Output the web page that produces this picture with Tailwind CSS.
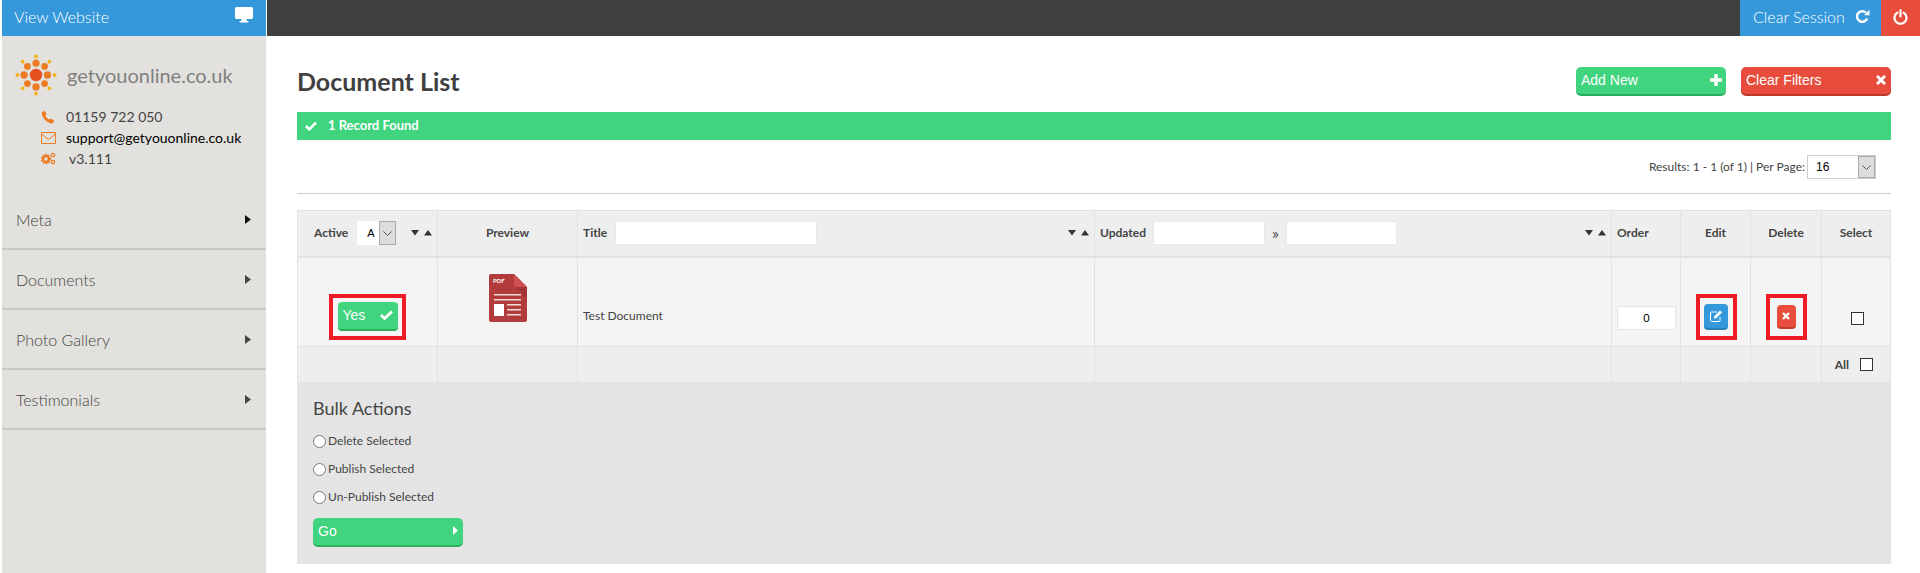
<!DOCTYPE html>
<html><head><meta charset="utf-8"><title>Document List</title>
<script src="https://cdn.jsdelivr.net/npm/@tailwindcss/browser@4"></script></head>
<body class="bg-white font-['Lato','Liberation_Sans',sans-serif] text-[#444] h-[573px] overflow-hidden">
<div class="flex h-[573px]">
  <aside class="w-[264px] ml-[2px] shrink-0 bg-[#e2e1dd] flex flex-col">
    <div class="h-[36px] bg-[#3498db] text-white flex items-center justify-between pl-[12px] pr-[13px] font-light text-[16px]">
      <span class="-mt-[3px]">View Website</span>
      <svg width="18" height="16" viewBox="0 0 18 16" class="-mt-[6px]"><path fill="#fff" fill-rule="evenodd" d="M1.500 0h15A1.500 1.500 0 0 1 18 1.500v9a1.500 1.500 0 0 1-1.500 1.500h-5l.4 2h1.600v1.500h-9V14h1.600l.4-2h-5A1.500 1.500 0 0 1 0 10.500v-9A1.500 1.500 0 0 1 1.500 0z"/></svg>
    </div>
    <div class="flex items-center mt-[16px] pl-[13px] h-[46px]">
      <svg width="42" height="42" viewBox="0 0 44 44" class="shrink-0">
        <g fill="#f5b21b"><circle cx="22" cy="2.500" r="2"/><circle cx="22" cy="41.500" r="2"/><circle cx="2.500" cy="22" r="2"/><circle cx="41.500" cy="22" r="2"/><circle cx="8" cy="8" r="2"/><circle cx="36" cy="8" r="2"/><circle cx="8" cy="36" r="2"/><circle cx="36" cy="36" r="2"/></g>
        <g fill="#ee7b22"><circle cx="22" cy="9.500" r="3.800"/><circle cx="22" cy="34.500" r="3.800"/><circle cx="9.500" cy="22" r="3.800"/><circle cx="34" cy="22" r="3.800"/><circle cx="13" cy="13" r="3.500"/><circle cx="31" cy="13" r="3.500"/><circle cx="13" cy="31" r="3.500"/><circle cx="31" cy="31" r="3.500"/></g>
        <circle cx="22" cy="22" r="6.500" fill="#e4511f"/>
      </svg>
      <span class="ml-[10px] text-[20px] text-[#808080] leading-none">getyouonline.co.uk</span>
    </div>
    <div class="mt-[8px] pl-[39px] text-[14px] leading-[21px]">
      <div class="flex items-center h-[21px]"><svg class="w-[14px] h-[14px] mr-[11px] shrink-0" viewBox="0 0 14 14"><path fill="#ee7b22" d="M3.500 1 5.500 4 4.300 5.600c.7 1.700 2.100 3.100 4 4L10 8.400l3 2-.8 2.400c-.3.500-1 .8-1.700.7C5.800 12.800 1.400 8.500.8 3.600.7 2.800 1 2.200 1.500 1.800z"/></svg><span class="text-[#444]">01159 722 050</span></div>
      <div class="flex items-center h-[21px]"><svg class="w-[15px] h-[12px] mr-[10px] shrink-0" viewBox="0 0 15 12"><path fill="none" stroke="#ee7b22" d="M.5.500h14v11H.5zM.5 2l7 5.500 7-5.500"/></svg><span class="text-black">support@getyouonline.co.uk</span></div>
      <div class="flex items-center h-[21px]"><svg class="w-[15px] h-[13px] mr-[13px] shrink-0" viewBox="0 0 15 13"><circle cx="5" cy="7" r="3" fill="none" stroke="#ee7b22" stroke-width="2.400"/><circle cx="5" cy="7" r="4.700" fill="none" stroke="#ee7b22" stroke-width="1.200" stroke-dasharray="1.500 1.500"/><circle cx="12" cy="3" r="1.700" fill="none" stroke="#ee7b22" stroke-width="1.200"/><circle cx="12" cy="10" r="1.700" fill="none" stroke="#ee7b22" stroke-width="1.200"/></svg><span>v3.111</span></div>
    </div>
    <nav class="mt-[21px] text-[16px] font-light text-[#444]">
      <a class="flex items-center justify-between h-[60px] pl-[14px] pr-[15px] border-b-[2px] border-[#c8c8c6] pt-[2px]"><span>Meta</span><svg width="6" height="9" viewBox="0 0 6 9" class="-mt-[2px]"><path fill="#111" d="M0 0l6 4.500-6 4.500z"/></svg></a>
      <a class="flex items-center justify-between h-[60px] pl-[14px] pr-[15px] border-b-[2px] border-[#c8c8c6] pt-[2px]"><span>Documents</span><svg width="6" height="9" viewBox="0 0 6 9" class="-mt-[2px]"><path fill="#444" d="M0 0l6 4.500-6 4.500z"/></svg></a>
      <a class="flex items-center justify-between h-[60px] pl-[14px] pr-[15px] border-b-[2px] border-[#c8c8c6] pt-[2px]"><span>Photo Gallery</span><svg width="6" height="9" viewBox="0 0 6 9" class="-mt-[2px]"><path fill="#444" d="M0 0l6 4.500-6 4.500z"/></svg></a>
      <a class="flex items-center justify-between h-[60px] pl-[14px] pr-[15px] border-b-[2px] border-[#c8c8c6] pt-[2px]"><span>Testimonials</span><svg width="6" height="9" viewBox="0 0 6 9" class="-mt-[2px]"><path fill="#444" d="M0 0l6 4.500-6 4.500z"/></svg></a>
    </nav>
  </aside>
  <div class="flex-1 min-w-0 ml-[1px]">
    <header class="h-[36px] bg-[#3f3f3f] flex justify-end">
      <a class="w-[141px] bg-[#3498db] text-white flex items-center pl-[13px] text-[16px] font-light"><span class="-mt-[3px]">Clear Session</span>
        <svg class="w-[15px] h-[15px] ml-[10px] -mt-[3px]" viewBox="0 0 15 15"><path fill="none" stroke="#fff" stroke-width="2.400" d="M12.200 9.500A5.300 5.300 0 1 1 11 3.700"/><path fill="#fff" d="M14.500 .8v5.500H9z"/></svg></a>
      <a class="w-[39px] bg-[#e74c3c] flex items-center justify-center"><svg class="w-[15px] h-[16px] -mt-[2px]" viewBox="0 0 15 16"><path fill="none" stroke="#fff" stroke-width="2.200" stroke-linecap="round" d="M4.300 3.700a6 6 0 1 0 6.400 0M7.500 1.200v6.300"/></svg></a>
    </header>
    <main class="pl-[30px] pr-[29px]">
      <div class="flex items-center justify-between h-[76px] pt-[15px]">
        <h1 class="text-[25px] font-bold text-[#3f3f3f] leading-none">Document List</h1>
        <div class="flex gap-[15px] -mt-[1px]">
          <button class="relative w-[150px] h-[29px] rounded-[5px] bg-[#40d47e] border-b-[2px] border-[#27ae60] text-white text-[14px] text-left pl-[5px] font-['Liberation_Sans',sans-serif]">Add New<svg class="absolute right-[4px] top-[7px] w-[12px] h-[12px]" viewBox="0 0 12 12"><path fill="#fff" d="M4.300 0h3.400v4.300H12v3.400H7.700V12H4.300V7.700H0V4.300h4.300z"/></svg></button>
          <button class="relative w-[150px] h-[29px] rounded-[5px] bg-[#e74c3c] border-b-[2px] border-[#c0392b] text-white text-[14px] text-left pl-[5px] font-['Liberation_Sans',sans-serif]">Clear Filters<svg class="absolute right-[5px] top-[8px] w-[10px] h-[10px]" viewBox="0 0 10 10"><path stroke="#fff" stroke-width="3" d="M1 1l8 8M9 1l-8 8"/></svg></button>
        </div>
      </div>
      <div class="h-[28px] bg-[#40d47e] text-white font-bold text-[13px] flex items-center pl-[8px]"><svg class="w-[12px] h-[10px] mr-[11px]" viewBox="0 0 12 10"><path fill="none" stroke="#fff" stroke-width="2.600" d="M1 5l3.300 3.300L11 1.500"/></svg>1 Record Found</div>
      <div class="flex justify-end items-center h-[24px] mt-[15px] pr-[15px] text-[12px] text-[#444]">
        <span class="mr-[2px]">Results: 1 - 1 (of 1) | Per Page:</span>
        <div class="relative w-[69px] h-[24px] border border-[#ccc] bg-white">
          <select class="appearance-none w-full h-full pl-[8px] text-[12px] text-black font-['Liberation_Sans',sans-serif] outline-none"><option>16</option></select>
          <span class="absolute right-0 top-0 bottom-0 w-[17px] bg-[#ddd] border border-[#aaa] flex items-center justify-center"><svg width="9" height="5" viewBox="0 0 9 5"><path fill="none" stroke="#555" d="M.5.500l4 4 4-4"/></svg></span>
        </div>
      </div>
      <hr class="mt-[14px] border-t border-[#ccc]">
      <table class="mt-[16px] w-full table-fixed border-collapse text-[12px] text-[#444]">
        <colgroup><col class="w-[140px]"><col class="w-[140px]"><col class="w-[517px]"><col class="w-[517px]"><col class="w-[69px]"><col class="w-[70px]"><col class="w-[71px]"><col></colgroup>
        <thead><tr class="h-[46px] bg-[#eee] font-bold border-b-[2px] border-[#e2e2e2]">
          <th class="border border-[#e2e2e2] px-0 font-bold text-left">
            <div class="flex items-center pl-[16px]"><span>Active</span>
              <div class="relative ml-[9px] w-[39px] h-[24px] bg-white"><select class="appearance-none w-full h-full pl-[10px] text-[11px] text-black font-normal font-['Liberation_Sans',sans-serif] outline-none"><option>A</option></select><span class="absolute right-0 top-0 bottom-0 w-[17px] bg-[#ddd] border border-[#aaa] flex items-center justify-center"><svg width="9" height="5" viewBox="0 0 9 5"><path fill="none" stroke="#555" d="M.5.500l4 4 4-4"/></svg></span></div>
              <svg class="ml-[15px]" width="21" height="6" viewBox="0 0 21 6"><path fill="#333" d="M0 0h8L4 5.500zM13 5.500h8L17 0z"/></svg></div>
          </th>
          <th class="border border-[#e2e2e2] font-bold">Preview</th>
          <th class="border border-[#e2e2e2] font-bold text-left"><div class="flex items-center pl-[5px]"><span>Title</span><input class="ml-[8px] w-[202px] h-[24px] bg-white border border-[#e8e8e8]"><svg class="ml-auto mr-[5px]" width="21" height="6" viewBox="0 0 21 6"><path fill="#333" d="M0 0h8L4 5.500zM13 5.500h8L17 0z"/></svg></div></th>
          <th class="border border-[#e2e2e2] font-bold text-left"><div class="flex items-center pl-[5px]"><span>Updated</span><input class="ml-[7px] w-[112px] h-[24px] bg-white border border-[#e8e8e8]"><span class="w-[21px] text-center font-normal text-[16px] leading-none">»</span><input class="w-[111px] h-[24px] bg-white border border-[#e8e8e8]"><svg class="ml-auto mr-[5px]" width="21" height="6" viewBox="0 0 21 6"><path fill="#333" d="M0 0h8L4 5.500zM13 5.500h8L17 0z"/></svg></div></th>
          <th class="border border-[#e2e2e2] font-bold text-left pl-[5px]">Order</th>
          <th class="border border-[#e2e2e2] font-bold">Edit</th>
          <th class="border border-[#e2e2e2] font-bold">Delete</th>
          <th class="border border-[#e2e2e2] font-bold">Select</th>
        </tr></thead>
        <tbody>
          <tr class="h-[90px] bg-[#f4f4f4]">
            <td class="border border-[#e2e2e2] align-top pt-[36px]"><div class="flex justify-center"><div class="w-[77px] h-[46px] border-4 border-[#ed1c24] flex items-center justify-center"><button class="relative w-[60px] h-[29px] rounded-[4px] bg-[#40d47e] border-b-[2px] border-[#27ae60] text-white text-[14px] text-left pl-[5px] font-['Liberation_Sans',sans-serif]">Yes<svg class="absolute right-[5px] top-[8px] w-[13px] h-[10px]" viewBox="0 0 13 10"><path fill="none" stroke="#fff" stroke-width="2.800" d="M1 5l3.500 3.500L12 1.500"/></svg></button></div></div></td>
            <td class="border border-[#e2e2e2] align-top pt-[16px]"><svg class="mx-auto" width="38" height="48" viewBox="0 0 38 48"><path fill="#b23b3b" d="M2 0h23l13 13v33a2 2 0 0 1-2 2H2a2 2 0 0 1-2-2V2a2 2 0 0 1 2-2z"/><path fill="#cf4f4f" d="M25 0l13 13H27a2 2 0 0 1-2-2z"/><path fill="#933030" d="M25 11l13 13V13H27z" opacity=".6"/><text x="4" y="9" font-size="6" font-weight="700" fill="#fff" font-family="Lato">PDF</text><path fill="#f2dcdc" d="M5 20h27v1.500H5zM5 25h27v1.500H5zM18 30h14v1.500H18zM18 35h14v1.500H18zM18 40h14v1.500H18z"/><path fill="#fff" d="M5 30h10v12H5z"/></svg></td>
            <td class="border border-[#e2e2e2] align-top pt-[49px] pl-[5px]">Test Document</td>
            <td class="border border-[#e2e2e2]"></td>
            <td class="border border-[#e2e2e2] align-top pt-[48px] pl-[5px]"><input value="0" class="w-[59px] h-[24px] bg-white border border-[#e4e4e4] text-center text-[11px] text-black font-normal"></td>
            <td class="border border-[#e2e2e2] align-top pt-[36px]"><div class="flex justify-center ml-[1px]"><div class="w-[41px] h-[46px] border-4 border-[#ed1c24] flex items-center justify-center"><button class="w-[24px] h-[26px] rounded-[4px] bg-[#3498db] border-b-[2px] border-[#2980b9] flex items-center justify-center"><svg class="w-[14px] h-[14px]" viewBox="0 0 14 14"><path fill="none" stroke="#fff" d="M11 8v3.500a1 1 0 0 1-1 1H2.500a1 1 0 0 1-1-1V4a1 1 0 0 1 1-1H8"/><path fill="#fff" d="M5 7.500 11 1.500l2 2-6 6H5z"/></svg></button></div></div></td>
            <td class="border border-[#e2e2e2] align-top pt-[36px]"><div class="flex justify-center"><div class="w-[41px] h-[46px] border-4 border-[#ed1c24] flex items-center justify-center"><button class="w-[19px] h-[24px] rounded-[4px] bg-[#e74c3c] border-b-[2px] border-[#c0392b] flex items-center justify-center"><svg class="w-[8px] h-[8px]" viewBox="0 0 8 8"><path stroke="#fff" stroke-width="2.400" d="M1 1l6 6M7 1l-6 6"/></svg></button></div></div></td>
            <td class="border border-[#e2e2e2] align-top pt-[54px]"><input type="checkbox" class="appearance-none block mx-auto translate-x-[1px] w-[13px] h-[13px] border border-[#333] bg-white"></td>
          </tr>
          <tr class="h-[36px] bg-[#eee]">
            <td class="border border-[#e2e2e2]"></td><td class="border border-[#e2e2e2]"></td><td class="border border-[#e2e2e2]"></td><td class="border border-[#e2e2e2]"></td><td class="border border-[#e2e2e2]"></td><td class="border border-[#e2e2e2]"></td><td class="border border-[#e2e2e2]"></td>
            <td class="border border-[#e2e2e2]"><div class="flex items-center justify-end pr-[17px] gap-[11px] font-bold"><span>All</span><input type="checkbox" class="appearance-none block w-[13px] h-[13px] border border-[#333] bg-white"></div></td>
          </tr>
        </tbody>
      </table>
      <section class="h-[181px] bg-[#e4e4e4] pl-[16px] pt-[14px]">
        <h2 class="text-[18px] leading-[22px] text-[#444]">Bulk Actions</h2>
        <label class="flex items-center h-[28px] mt-[8px] text-[12px]"><input type="radio" name="bulk" class="w-[13px] h-[13px] m-0 mr-[2px]">Delete Selected</label>
        <label class="flex items-center h-[28px] text-[12px]"><input type="radio" name="bulk" class="w-[13px] h-[13px] m-0 mr-[2px]">Publish Selected</label>
        <label class="flex items-center h-[28px] text-[12px]"><input type="radio" name="bulk" class="w-[13px] h-[13px] m-0 mr-[2px]">Un-Publish Selected</label>
        <button class="relative mt-[7px] w-[150px] h-[29px] rounded-[5px] bg-[#40d47e] border-b-[2px] border-[#27ae60] text-white text-[14px] text-left pl-[5px] font-['Liberation_Sans',sans-serif]">Go<svg class="absolute right-[5px] top-[8px] w-[5px] h-[9px]" viewBox="0 0 5 9"><path fill="#fff" d="M0 0l5 4.500L0 9z"/></svg></button>
      </section>
    </main>
  </div>
</div>
</body></html>
